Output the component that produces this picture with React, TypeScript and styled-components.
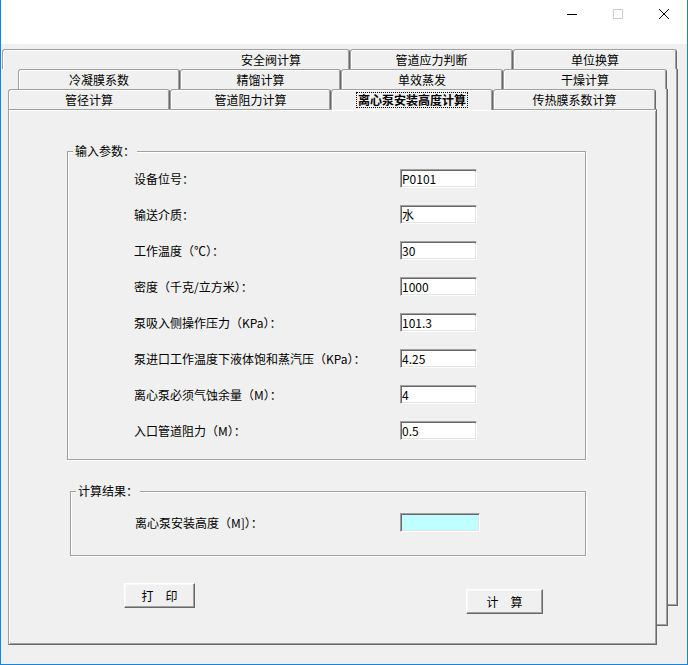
import React from "react";
import styled, { createGlobalStyle } from "styled-components";

const Global = createGlobalStyle`
  html, body { margin: 0; padding: 0; background: #f0f0f0; }
  body {
    font-family: "Noto Sans CJK SC", "Noto Sans", sans-serif;
    font-size: 12px;
    color: #000;
  }
  #root { width: 688px; height: 665px; }
`;

const Window = styled.div`
  width: 688px;
  height: 665px;
  box-sizing: border-box;
  border: 1px solid #1883d7;
  border-top: none;
  background: #f0f0f0;
  display: flex;
  flex-direction: column;
  overflow: hidden;
`;

const TitleBar = styled.div`
  height: 44px;
  flex: none;
  background: #fff;
  display: flex;
  justify-content: flex-end;
  align-items: flex-start;
`;

const CaptionButton = styled.div`
  width: 46px;
  height: 27px;
  display: flex;
  align-items: center;
  justify-content: center;
`;

const Client = styled.div`
  flex: 1;
  padding-top: 5px;
`;

const TabControl = styled.div`
  position: relative;
`;

const TabRow = styled.div<{ $left: number; $z: number }>`
  position: relative;
  z-index: ${(p) => p.$z};
  display: flex;
  align-items: flex-start;
  height: 20px;
  margin-left: ${(p) => p.$left}px;
`;

const Tab = styled.div<{ $w: number; $active?: boolean; $padRight?: number }>`
  box-sizing: border-box;
  flex: none;
  width: ${(p) => p.$w}px;
  height: ${(p) => (p.$active ? 21 : 20)}px;
  display: flex;
  align-items: center;
  justify-content: ${(p) => (p.$padRight ? "flex-end" : "center")};
  padding-right: ${(p) => p.$padRight ?? 0}px;
  padding-bottom: ${(p) => (p.$active ? 1 : 0)}px;
  background: #f0f0f0;
  border: 1px solid;
  border-bottom: none;
  border-color: #a0a0a0 #696969 transparent #a0a0a0;
  border-radius: 3px 3px 0 0;
  box-shadow: inset 1px 1px 0 #fff, inset -1px 0 0 #a0a0a0;
  font-weight: ${(p) => (p.$active ? 700 : 400)};
  line-height: 16px;
  white-space: nowrap;
`;

const FocusLabel = styled.span`
  border: 1px dotted #000;
  padding: 0 1px;
  line-height: 14px;
`;

const Layer = styled.div<{ $top: number; $left: number; $w: number; $h: number; $z: number }>`
  position: absolute;
  z-index: ${(p) => p.$z};
  top: ${(p) => p.$top}px;
  left: ${(p) => p.$left}px;
  width: ${(p) => p.$w}px;
  height: ${(p) => p.$h}px;
  box-sizing: border-box;
  background: #f0f0f0;
  border-right: 1px solid #696969;
  border-bottom: 1px solid #696969;
  box-shadow: inset -1px -1px 0 #a0a0a0;
`;

const Page = styled.div`
  position: relative;
  z-index: 5;
  margin-left: 7px;
  width: 649px;
  height: 536px;
  box-sizing: border-box;
  background: #f0f0f0;
  border: 1px solid;
  border-color: #a0a0a0 #696969 #696969 #a0a0a0;
  box-shadow: inset 1px 1px 0 #fff, inset -1px -1px 0 #a0a0a0;
  display: flex;
  flex-direction: column;
`;

const Group = styled.div<{ $top: number; $left: number; $w: number; $h: number }>`
  position: relative;
  box-sizing: border-box;
  margin: ${(p) => p.$top}px 0 0 ${(p) => p.$left}px;
  width: ${(p) => p.$w}px;
  height: ${(p) => p.$h}px;
  border: 1px solid #a0a0a0;
  box-shadow: 1px 1px 0 #fff, inset 1px 1px 0 #fff;
`;

const Legend = styled.span`
  position: absolute;
  top: -9px;
  left: 5px;
  padding: 0 2px;
  line-height: 16px;
  background: #f0f0f0;
  white-space: nowrap;
`;

const FieldList = styled.div<{ $padTop: number }>`
  display: flex;
  flex-direction: column;
  gap: 17px;
  padding-top: ${(p) => p.$padTop}px;
`;

const FieldRow = styled.div<{ $padLeft: number; $labelW: number; $inputW: number }>`
  display: grid;
  grid-template-columns: ${(p) => p.$labelW}px ${(p) => p.$inputW}px;
  align-items: center;
  height: 19px;
  padding-left: ${(p) => p.$padLeft}px;
`;

const Label = styled.span`
  white-space: nowrap;
  line-height: 16px;
`;

const TextBox = styled.input<{ $result?: boolean }>`
  box-sizing: border-box;
  width: 100%;
  height: 19px;
  margin: 0;
  padding: 0 0 0 1px;
  border: 1px solid;
  border-color: #a0a0a0 #fff #fff #a0a0a0;
  box-shadow: inset 1px 1px 0 #696969, inset -1px -1px 0 #e3e3e3;
  background: ${(p) => (p.$result ? "#bfffff" : "#fff")};
  font-family: "Noto Sans CJK SC", "Noto Sans", sans-serif;
  font-size: 12px;
  color: #000;
  outline: none;
`;

const ButtonRow = styled.div`
  display: flex;
  align-items: flex-start;
  margin: 27px 0 0 115px;
`;

const PushButton = styled.button<{ $w: number; $offsetTop?: number; $gap?: number }>`
  box-sizing: border-box;
  width: ${(p) => p.$w}px;
  height: 25px;
  margin: ${(p) => p.$offsetTop ?? 0}px 0 0 ${(p) => p.$gap ?? 0}px;
  padding: 0;
  border: 1px solid;
  border-color: #fff #696969 #696969 #fff;
  box-shadow: inset -1px -1px 0 #a0a0a0, inset 1px 1px 0 #f8f8f8;
  background: #f0f0f0;
  font-family: "Noto Sans CJK SC", "Noto Sans", sans-serif;
  font-size: 12px;
  color: #000;
  white-space: pre;
`;

const fields: [string, string][] = [
  ["设备位号：", "P0101"],
  ["输送介质：", "水"],
  ["工作温度（℃）：", "30"],
  ["密度（千克/立方米）：", "1000"],
  ["泵吸入侧操作压力（KPa）：", "101.3"],
  ["泵进口工作温度下液体饱和蒸汽压（KPa）：", "4.25"],
  ["离心泵必须气蚀余量（M）：", "4"],
  ["入口管道阻力（M）：", "0.5"],
];

export default function App() {
  return (
    <>
      <Global />
      <Window>
        <TitleBar>
          <CaptionButton>
            <svg width="12" height="12" viewBox="0 0 12 12">
              <line x1="1" y1="6.5" x2="11" y2="6.5" stroke="#000" strokeWidth="1" />
            </svg>
          </CaptionButton>
          <CaptionButton>
            <svg width="12" height="12" viewBox="0 0 12 12">
              <rect x="1.5" y="1.5" width="9" height="9" fill="none" stroke="#cccccc" strokeWidth="1" />
            </svg>
          </CaptionButton>
          <CaptionButton>
            <svg width="12" height="12" viewBox="0 0 12 12">
              <path d="M1 1 L11 11 M11 1 L1 11" stroke="#000" strokeWidth="1" />
            </svg>
          </CaptionButton>
        </TitleBar>
        <Client>
          <TabControl>
            <TabRow $left={1} $z={1}>
              <Tab $w={348} $padRight={48}>安全阀计算</Tab>
              <Tab $w={163}>管道应力判断</Tab>
              <Tab $w={164}>单位换算</Tab>
            </TabRow>
            <Layer $top={20} $left={17} $w={660} $h={537} $z={1} />
            <TabRow $left={17} $z={2}>
              <Tab $w={162}>冷凝膜系数</Tab>
              <Tab $w={161}>精馏计算</Tab>
              <Tab $w={162}>单效蒸发</Tab>
              <Tab $w={164}>干燥计算</Tab>
            </TabRow>
            <Layer $top={40} $left={17} $w={650} $h={537} $z={3} />
            <TabRow $left={7} $z={6}>
              <Tab $w={162}>管径计算</Tab>
              <Tab $w={161}>管道阻力计算</Tab>
              <Tab $w={162} $active>
                <FocusLabel>离心泵安装高度计算</FocusLabel>
              </Tab>
              <Tab $w={163}>传热膜系数计算</Tab>
            </TabRow>
            <Page>
              <Group $top={41} $left={58} $w={519} $h={309}>
                <Legend>输入参数：</Legend>
                <FieldList $padTop={17}>
                  {fields.map(([label, value]) => (
                    <FieldRow key={label} $padLeft={66} $labelW={266} $inputW={77}>
                      <Label>{label}</Label>
                      <TextBox defaultValue={value} readOnly />
                    </FieldRow>
                  ))}
                </FieldList>
              </Group>
              <Group $top={31} $left={61} $w={516} $h={65}>
                <Legend>计算结果：</Legend>
                <FieldList $padTop={21}>
                  <FieldRow $padLeft={64} $labelW={265} $inputW={80}>
                    <Label>离心泵安装高度（M]）：</Label>
                    <TextBox $result defaultValue="" readOnly />
                  </FieldRow>
                </FieldList>
              </Group>
              <ButtonRow>
                <PushButton $w={71}>打　印</PushButton>
                <PushButton $w={77} $gap={271} $offsetTop={6}>计　算</PushButton>
              </ButtonRow>
            </Page>
          </TabControl>
        </Client>
      </Window>
    </>
  );
}
